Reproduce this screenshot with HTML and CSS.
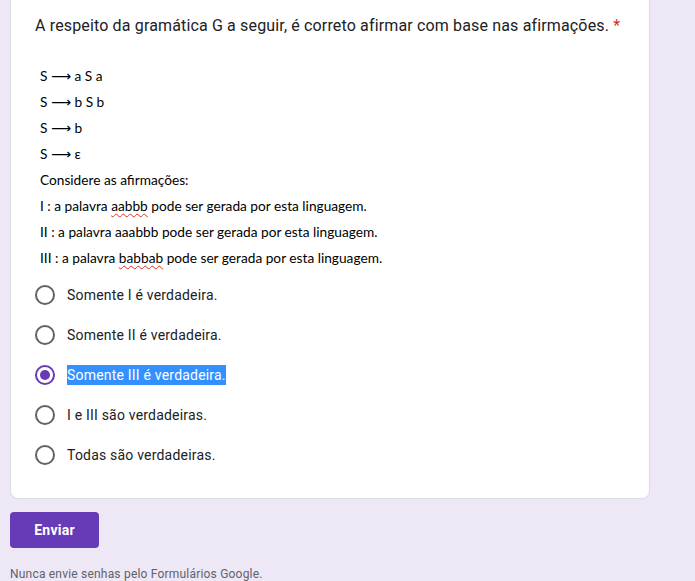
FILE: index.html
```html
<!DOCTYPE html>
<html lang="pt">
<head>
<meta charset="utf-8">
<link rel="stylesheet" href="styles.css">
</head>
<body>
<div class="card">
  <div class="title">A respeito da gramática G a seguir, é correto afirmar com base nas afirmações. <span class="req">*</span></div>
  <div class="desc">
    <p>S <span class="arr">⟶</span> a S a</p>
    <p>S <span class="arr">⟶</span> b S b</p>
    <p>S <span class="arr">⟶</span> b</p>
    <p>S <span class="arr">⟶</span> ε</p>
    <p>Considere as afirmações:</p>
    <p>I : a palavra <span class="spell">aabbb</span> pode ser gerada por esta linguagem.</p>
    <p>II : a palavra aaabbb pode ser gerada por esta linguagem.</p>
    <p>III : a palavra <span class="spell">babbab</span> pode ser gerada por esta linguagem.</p>
  </div>
  <div class="options">
    <div class="opt"><span class="radio"></span><span class="label">Somente I é verdadeira.</span></div>
    <div class="opt"><span class="radio"></span><span class="label">Somente II é verdadeira.</span></div>
    <div class="opt"><span class="radio checked"></span><span class="label sel">Somente III é verdadeira.</span></div>
    <div class="opt"><span class="radio"></span><span class="label">I e III são verdadeiras.</span></div>
    <div class="opt"><span class="radio"></span><span class="label">Todas são verdadeiras.</span></div>
  </div>
</div>
<button class="submit">Enviar</button>
<div class="footer">Nunca envie senhas pelo Formulários Google.</div>
</body>
</html>
```
FILE: styles.css
```css
html, body {
  margin: 0;
  padding: 0;
  background: #ede7f6;
  font-family: Roboto, "Liberation Sans", sans-serif;
  color: #202124;
}
body {
  padding-left: 10px;
}
.card {
  background: #fff;
  border: 1px solid #dadce0;
  border-top: none;
  border-radius: 0 0 8px 8px;
  padding: 14px 24px 23px 24px;
  box-sizing: content-box;
  width: 590px;
}
.title {
  font-size: 16px;
  line-height: 24px;
  letter-spacing: 0.15px;
  color: #202124;
}
.req {
  color: #d93025;
}
.desc {
  margin-top: 25px;
  padding-left: 5px;
  font-family: Lato, "Open Sans", sans-serif;
  font-size: 13.7px;
  color: #000;
}
.desc p {
  margin: 0;
  height: 26px;
  line-height: 26px;
}
.arr {
  font-family: "DejaVu Sans", sans-serif;
  font-size: 14px;
  line-height: 1;
}
.spell {
  text-decoration: underline wavy #d93025;
  text-decoration-thickness: 1px;
  text-underline-offset: 2px;
}
.options {
  margin-top: 4px;
  display: flex;
  flex-direction: column;
}
.opt {
  height: 40px;
  display: flex;
  align-items: center;
  gap: 12px;
}
.radio {
  width: 20px;
  height: 20px;
  box-sizing: border-box;
  border: 2px solid #5f6368;
  border-radius: 50%;
  display: flex;
  align-items: center;
  justify-content: center;
  flex: none;
}
.radio.checked {
  border-color: #673ab7;
}
.radio.checked::after {
  content: "";
  width: 10px;
  height: 10px;
  border-radius: 50%;
  background: #673ab7;
}
.label {
  font-size: 14px;
  line-height: 20px;
  letter-spacing: 0.2px;
  color: #202124;
}
.label.sel {
  background: #3390ff;
  color: #fff;
}
.submit {
  display: block;
  margin-top: 13px;
  width: 89px;
  height: 36px;
  border: none;
  border-radius: 4px;
  background: #673ab7;
  color: #fff;
  font-family: Roboto, sans-serif;
  font-weight: 700;
  font-size: 14px;
  letter-spacing: 0.25px;
  padding: 0;
}
.footer {
  margin-top: 18px;
  font-size: 12px;
  line-height: 16px;
  color: #5f6368;
  letter-spacing: 0.2px;
}
```
